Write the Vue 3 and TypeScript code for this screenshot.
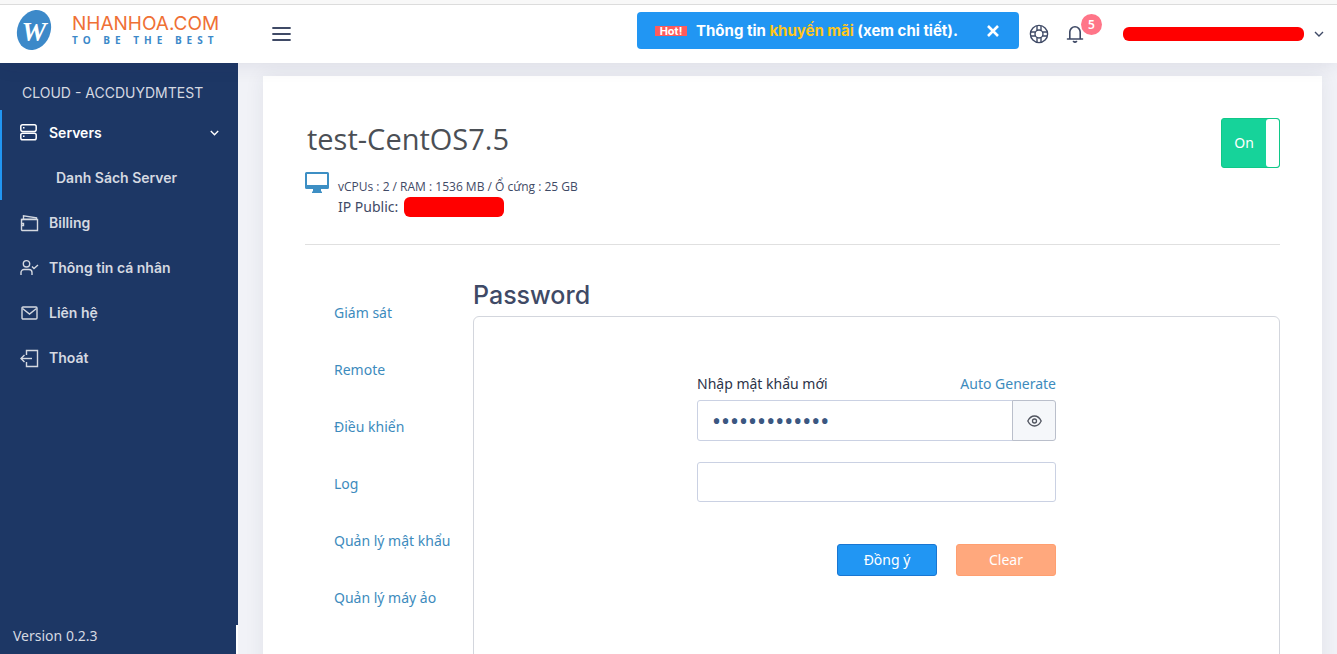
<script setup lang="ts">
import { ref } from 'vue'

interface MenuItem {
  label: string
  icon: string[]
}

const menu: MenuItem[] = [
  {
    label: 'Billing',
    icon: ['M1.5 5.5h16v11h-15a1 1 0 0 1-1-1z', 'M1.5 5.5l2-.2V1.8l13 2v1.7', 'M3.5 5.3h13', 'M1.5 9.5h2v2h-2'],
  },
  {
    label: 'Thông tin cá nhân',
    icon: ['M6.5 8a3.2 3.2 0 1 0 0-6.400 3.200 3.200 0 0 0 0 6.400z', 'M1 16v-2.500a3 3 0 0 1 3-3h5a3 3 0 0 1 3 3V16', 'M12 7.500l2 2 4-3.500'],
  },
  {
    label: 'Liên hệ',
    icon: ['M3 3h13a1 1 0 0 1 1 1v10a1 1 0 0 1-1 1H3a1 1 0 0 1-1-1V4a1 1 0 0 1 1-1z', 'M2.500 4.500l7 5.500 7-5.500'],
  },
  {
    label: 'Thoát',
    icon: ['M6.500 6V1.500h11v16h-11V13', 'M12 9.500H1', 'M4.500 6L1 9.500 4.500 13'],
  },
]

const actions: string[] = ['Giám sát', 'Remote', 'Điều khiển', 'Log', 'Quản lý mật khẩu', 'Quản lý máy ảo']

const powered = ref(true)
const password = ref('abcdefghijklm')
const confirmation = ref('')
const revealed = ref(false)

function clearForm(): void {
  password.value = ''
  confirmation.value = ''
}
</script>

<template>
  <div class="app">
    <header class="header">
      <a class="brand" href="#" aria-label="Nhanhoa.com">
        <svg class="brand-mark" width="36" height="42" viewBox="0 0 36 42">
          <ellipse cx="18" cy="21" rx="16.500" ry="20.500" transform="rotate(22 18 21)" fill="#3c89c9" />
          <text x="18" y="32" text-anchor="middle" class="brand-letter">W</text>
        </svg>
        <span class="brand-text">
          <span class="brand-name">NHANHOA.COM</span>
          <span class="brand-motto">TO BE THE BEST</span>
        </span>
      </a>
      <button class="icon-button toggle" type="button" aria-label="Menu">
        <svg width="20" height="14" viewBox="0 0 20 14" fill="none" stroke="#3f4a66" stroke-width="1.800" stroke-linecap="round">
          <path d="M1 1h17M1 7h17M1 13h17" />
        </svg>
      </button>

      <div class="promo">
        <span class="hot">Hot!</span>
        <a class="promo-text" href="#">Thông tin <em>khuyến mãi</em> (xem chi tiết).</a>
        <button class="icon-button" type="button" aria-label="Close">
          <svg width="12" height="12" viewBox="0 0 12 12" fill="none" stroke="#fff" stroke-width="2.600">
            <path d="M1 1l10 10M11 1L1 11" />
          </svg>
        </button>
      </div>

      <button class="icon-button help" type="button" aria-label="Help">
        <svg width="20" height="20" viewBox="0 0 20 20" fill="none" stroke="#3f4a66" stroke-width="1.400">
          <circle cx="10" cy="10" r="8.600" />
          <circle cx="10" cy="10" r="4" />
          <path d="M8 1.700v4.800M12 1.700v4.800M8 13.500v4.800M12 13.500v4.800M1.700 8h4.800M1.700 12h4.800M13.500 8h4.800M13.500 12h4.800" />
        </svg>
      </button>
      <button class="icon-button bell" type="button" aria-label="Notifications">
        <svg width="18" height="18" viewBox="0 0 18 18" fill="none" stroke="#3f4a66" stroke-width="1.600" stroke-linecap="round" stroke-linejoin="round">
          <path d="M1.500 14h15M3.800 14V7a5.200 5.200 0 0 1 10.400 0v7M7.500 16.500l1.500.8 1.500-.8" />
        </svg>
        <span class="badge">5</span>
      </button>
      <button class="icon-button user" type="button" aria-label="Account">
        <span class="mask mask-user"></span>
        <svg width="10" height="6" viewBox="0 0 10 6" fill="none" stroke="#3f4a66" stroke-width="1.400">
          <path d="M1 1l4 4 4-4" />
        </svg>
      </button>
    </header>

    <div class="body">
      <aside class="sidebar">
        <p class="account">CLOUD - ACCDUYDMTEST</p>
        <nav class="nav">
          <div class="group">
            <a class="nav-item current" href="#">
              <svg class="nav-icon" width="19" height="19" viewBox="0 0 19 19" fill="none" stroke="currentColor" stroke-width="1.500">
                <rect x="1.800" y="1.800" width="15.400" height="6.600" rx="1.800" />
                <rect x="1.800" y="10.200" width="15.400" height="6.600" rx="1.800" />
                <path d="M4 4.800h1.500M4 13.200h1.500" />
              </svg>
              <span>Servers</span>
              <svg class="nav-arrow" width="9" height="6" viewBox="0 0 9 6" fill="none" stroke="currentColor" stroke-width="1.400">
                <path d="M.8 1l3.700 3.700L8.200 1" />
              </svg>
            </a>
            <a class="nav-item sub" href="#">Danh Sách Server</a>
          </div>
          <a v-for="item in menu" :key="item.label" class="nav-item" href="#">
            <svg class="nav-icon" width="19" height="19" viewBox="-1 -1 19 19" fill="none" stroke="currentColor" stroke-width="1.400">
              <path v-for="d in item.icon" :key="d" :d="d" />
            </svg>
            <span>{{ item.label }}</span>
          </a>
        </nav>
        <footer class="version">Version 0.2.3</footer>
      </aside>

      <main class="main">
        <section class="card">
          <div class="summary">
            <div>
              <h1>test-CentOS7.5</h1>
              <div class="specs">
                <svg width="24" height="21" viewBox="0 0 24 21">
                  <path fill="#3d8fc4" fill-rule="evenodd" d="M1.500 0h21A1.500 1.500 0 0 1 24 1.500v14a1.500 1.500 0 0 1-1.500 1.500H16v2.500h1V21H7v-1.500h1V17H1.500A1.500 1.500 0 0 1 0 15.500v-14A1.500 1.500 0 0 1 1.500 0zM2 2v11h20V2z" />
                </svg>
                <div>
                  <p class="hardware">vCPUs : 2 / RAM : 1536 MB / Ổ cứng : 25 GB</p>
                  <p class="address">IP Public: <span class="mask mask-ip"></span></p>
                </div>
              </div>
            </div>
            <button class="power" :class="{ off: !powered }" type="button" :aria-pressed="powered" @click="powered = !powered">
              <span>{{ powered ? 'On' : 'Off' }}</span>
              <i></i>
            </button>
          </div>

          <div class="detail">
            <nav class="actions">
              <a v-for="action in actions" :key="action" href="#">{{ action }}</a>
            </nav>
            <div class="content">
              <h2>Password</h2>
              <div class="panel">
                <form class="form" @submit.prevent>
                  <div class="labels">
                    <label for="password">Nhập mật khẩu mới</label>
                    <a href="#">Auto Generate</a>
                  </div>
                  <div class="field">
                    <input id="password" v-model="password" class="secret" :type="revealed ? 'text' : 'password'" />
                    <button class="reveal" type="button" aria-label="Show password" @click="revealed = !revealed">
                      <svg width="15" height="12" viewBox="0 0 15 12" fill="none" stroke="#50545f" stroke-width="1.300">
                        <path d="M.8 6C2.500 2.600 4.800 1 7.500 1s5 1.600 6.700 5c-1.700 3.400-4 5-6.700 5S2.500 9.400.8 6z" />
                        <circle cx="7.500" cy="6" r="2" />
                      </svg>
                    </button>
                  </div>
                  <input v-model="confirmation" class="confirm" type="password" aria-label="Confirm password" />
                  <div class="buttons">
                    <button class="submit" type="submit">Đồng ý</button>
                    <button class="clear" type="button" @click="clearForm">Clear</button>
                  </div>
                </form>
              </div>
            </div>
          </div>
        </section>
      </main>
    </div>
  </div>
</template>

<style>
body {
  margin: 0;
}
</style>

<style scoped>
* {
  box-sizing: border-box;
}

.app {
  display: flex;
  flex-direction: column;
  height: 100vh;
  overflow: hidden;
  background: #f1f2f7;
  color: #3f4a66;
  font: 14px/20px "Noto Sans", "Open Sans", sans-serif;
}

a {
  color: #3d8bbd;
  text-decoration: none;
}

p,
h1,
h2 {
  margin: 0;
}

button,
input {
  font: inherit;
}

.icon-button {
  display: flex;
  align-items: center;
  padding: 0;
  border: 0;
  background: none;
}

.header {
  position: relative;
  display: flex;
  align-items: center;
  flex: none;
  height: 63px;
  padding: 5px 13px 0 16px;
  background: linear-gradient(#f8f8f8 4px, #dcdcdc 4px, #dcdcdc 5px, #fff 5px);
  box-shadow: 0 0 20px rgba(40, 45, 80, 0.12);
}

.brand {
  display: flex;
  align-items: center;
  width: 256px;
  gap: 20px;
  padding-bottom: 8px;
}

.brand-letter {
  font: italic bold 28px "Liberation Serif", serif;
  fill: #fff;
}

.brand-text {
  display: flex;
  flex-direction: column;
}

.brand-name {
  color: #ef7035;
  font: 19px/20px Inter, sans-serif;
}

.brand-motto {
  color: #3c89c9;
  font: bold 10px/12px "Open Sans", sans-serif;
  letter-spacing: 5px;
  white-space: nowrap;
}

.promo {
  display: flex;
  align-items: center;
  width: 382px;
  height: 37px;
  margin: 0 10px 7px auto;
  padding: 0 20px 0 18px;
  border-radius: 4px;
  background: #2196f3;
  font: bold 15px/20px Inter, sans-serif;
}

.hot {
  width: 32px;
  margin-right: 9px;
  background: #ff5b5c;
  color: #fff;
  font-size: 11px;
  line-height: 10px;
  text-align: center;
}

.promo-text {
  flex: 1;
  color: #fff;
  white-space: nowrap;
}

.promo em {
  color: #ffc61a;
  font-style: normal;
}

.help {
  margin-right: 17px;
}

.bell {
  position: relative;
  margin-right: 39px;
}

.badge {
  position: absolute;
  top: -11px;
  left: 15px;
  width: 21px;
  border-radius: 11px;
  background: #ff7588;
  color: #fff;
  font-weight: 600;
  font-size: 12px;
  line-height: 21px;
  text-align: center;
}

.user {
  gap: 10px;
}

.mask {
  display: inline-block;
  background: #f00;
}

.mask-user {
  width: 181px;
  height: 14px;
  border-radius: 6px;
}

.mask-ip {
  width: 100px;
  height: 20px;
  margin-left: 2px;
  border-radius: 6px;
  vertical-align: top;
}

.body {
  display: flex;
  flex: 1;
  min-height: 0;
}

.sidebar {
  display: flex;
  flex-direction: column;
  flex: none;
  width: 238px;
  background: #1d3765;
  font-family: Inter, sans-serif;
}

.account {
  padding: 20px 22px 7px;
  color: #d5d9e1;
  font-size: 14px;
  white-space: nowrap;
}

.nav {
  flex: 1;
}

.group {
  border-left: 2px solid #2196f3;
}

.group .nav-item {
  padding-left: 17px;
}

.nav-item {
  display: flex;
  align-items: center;
  height: 45px;
  padding: 0 19px;
  gap: 11px;
  color: #d5d9e1;
  font-weight: 600;
}

.nav-item.current {
  color: #fff;
}

.group .nav-item.sub {
  padding-left: 54px;
}

.nav-icon {
  overflow: visible;
}

.nav-arrow {
  margin-left: auto;
}

.version {
  padding: 0 13px 8px;
  border-right: 2px solid #fff;
  color: #d5d9e1;
  font: 14px/21px "Noto Sans", "Open Sans", sans-serif;
}

.main {
  flex: 1;
  padding: 13px 15px 0 25px;
}

.card {
  display: flex;
  flex-direction: column;
  min-height: 100%;
  padding: 42px 42px 0;
  background: #fff;
  box-shadow: 0 0 18px rgba(40, 45, 80, 0.08);
}

.summary {
  display: flex;
  align-items: flex-start;
  justify-content: space-between;
  padding-bottom: 27px;
  border-bottom: 1px solid #e0e0e0;
}

h1 {
  padding-left: 2px;
  color: #4b4f55;
  font-weight: 400;
  font-size: 29px;
  line-height: 42px;
  font-family: "Open Sans", sans-serif;
}

.specs {
  display: flex;
  gap: 9px;
  padding-top: 12px;
}

.hardware {
  padding-top: 5px;
  font: 12px/20px "Open Sans", "Noto Sans", sans-serif;
}

.address {
  line-height: 20px;
}

.power {
  display: flex;
  width: 59px;
  height: 50px;
  padding: 0;
  border: 1px solid #10c888;
  border-radius: 3px;
  background: #16d39a;
  color: #fff;
}

.power span {
  flex: 1;
  align-self: center;
}

.power i {
  align-self: stretch;
  width: 13px;
  border-radius: 3px;
  background: #fff;
}

.power.off {
  background: #98a4b8;
}

.detail {
  display: flex;
  flex: 1;
  padding-top: 35px;
}

.actions {
  display: flex;
  flex-direction: column;
  flex: none;
  width: 168px;
  padding: 4px 0 0 29px;
}

.actions a {
  line-height: 57px;
  white-space: nowrap;
}

.content {
  display: flex;
  flex-direction: column;
  flex: 1;
}

h2 {
  padding-bottom: 6px;
  font: 500 25px/30px Inter, sans-serif;
}

.panel {
  flex: 1;
  padding: 56px 0 100px;
  border: 1px solid #d3d6dd;
  border-radius: 6px;
}

.form {
  width: 359px;
  margin: 0 auto;
}

.labels {
  display: flex;
  justify-content: space-between;
  padding-bottom: 6px;
  line-height: 21px;
}

.labels label {
  color: #2c3348;
}

.field {
  display: flex;
  margin-bottom: 21px;
}

.secret,
.confirm {
  display: block;
  width: 100%;
  height: 40px;
  padding: 0 14px;
  border: 1px solid #cad1e3;
  border-radius: 3px;
  background: #fff;
  color: #3b5781;
}

.secret {
  height: 41px;
  border-radius: 3px 0 0 3px;
  font-size: 24px;
}

.reveal {
  display: flex;
  align-items: center;
  justify-content: center;
  flex: none;
  width: 44px;
  margin-left: -1px;
  border: 1px solid #babfcb;
  border-radius: 0 3px 3px 0;
  background: #f5f7fa;
}

.buttons {
  display: flex;
  justify-content: flex-end;
  gap: 19px;
  padding-top: 42px;
}

.buttons button {
  width: 100px;
  height: 32px;
  padding: 0;
  border: 1px solid #1976d2;
  border-radius: 3px;
  background: #2196f3;
  color: #fff;
}

.buttons .clear {
  border-color: #ff9f70;
  background: #ffa87d;
}
</style>
